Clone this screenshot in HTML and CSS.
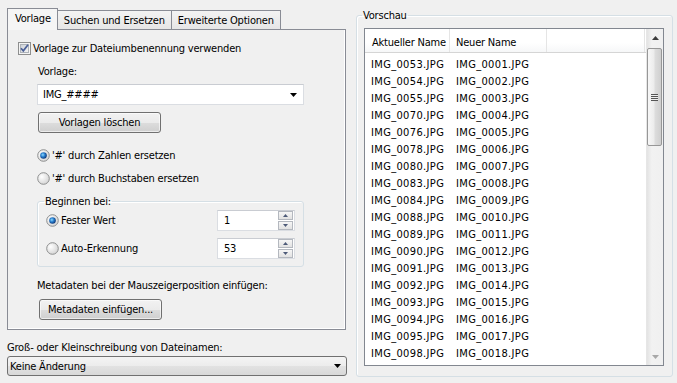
FILE: index.html
```html
<!DOCTYPE html>
<html lang="de">
<head>
    <meta charset="UTF-8">
    <title>Umbenennen</title>
    <link rel="stylesheet" href="styles.css">
</head>
<body>
<div class="window">
    <div class="left">
        <div class="tabs">
            <div class="tab active">Vorlage</div>
            <div class="tab">Suchen und Ersetzen</div>
            <div class="tab">Erweiterte Optionen</div>
        </div>
        <div class="panel">
            <div class="check-row">
                <svg class="checkbox" width="13" height="13" viewBox="0 0 13 13">
                    <defs>
                        <linearGradient id="cbFill" x1="0" y1="0" x2="1" y2="1">
                            <stop offset="0" stop-color="#cbcfd5"/>
                            <stop offset="1" stop-color="#f6f6f6"/>
                        </linearGradient>
                    </defs>
                    <rect x="0.5" y="0.5" width="12" height="12" fill="#f4f4f4" stroke="#8e8f8f"/>
                    <rect x="2.5" y="2.5" width="8" height="8" fill="url(#cbFill)" stroke="#aeb3b9"/>
                    <path d="M3 6.2 L5.3 8.8 L10 2.8" fill="none" stroke="#4a5f97" stroke-width="1.7"/>
                </svg>
                <span>Vorlage zur Dateiumbenennung verwenden</span>
            </div>
            <div class="indent">
                <div class="field-label">Vorlage:</div>
                <div class="combo">
                    <span>IMG_####</span>
                    <svg class="arrow" width="7" height="4" viewBox="0 0 7 4"><path d="M0 0h7L3.5 4z"/></svg>
                </div>
                <button class="btn btn-templates">Vorlagen löschen</button>

                <div class="radio-row first">
                    <svg class="radio" width="13" height="13" viewBox="0 0 13 13">
                        <defs>
                            <radialGradient id="rOff" cx="0.35" cy="0.35" r="0.7">
                                <stop offset="0" stop-color="#ffffff"/>
                                <stop offset="1" stop-color="#d4d4d4"/>
                            </radialGradient>
                            <radialGradient id="rOn" cx="0.4" cy="0.4" r="0.6">
                                <stop offset="0" stop-color="#8fdcff"/>
                                <stop offset="0.5" stop-color="#2a7fcf"/>
                                <stop offset="1" stop-color="#0c3a7c"/>
                            </radialGradient>
                        </defs>
                        <circle cx="6.5" cy="6.5" r="5.8" fill="url(#rOff)" stroke="#8e8f8f"/>
                        <circle cx="6.5" cy="6.5" r="3.3" fill="url(#rOn)"/>
                    </svg>
                    <span>'#' durch Zahlen ersetzen</span>
                </div>
                <div class="radio-row">
                    <svg class="radio" width="13" height="13" viewBox="0 0 13 13">
                        <circle cx="6.5" cy="6.5" r="5.8" fill="url(#rOff)" stroke="#8e8f8f"/>
                    </svg>
                    <span>'#' durch Buchstaben ersetzen</span>
                </div>

                <fieldset class="group">
                    <legend>Beginnen bei:</legend>
                    <div class="group-row">
                        <svg class="radio" width="13" height="13" viewBox="0 0 13 13">
                            <circle cx="6.5" cy="6.5" r="5.8" fill="url(#rOff)" stroke="#8e8f8f"/>
                            <circle cx="6.5" cy="6.5" r="3.3" fill="url(#rOn)"/>
                        </svg>
                        <span>Fester Wert</span>
                        <div class="spin">
                            <span>1</span>
                            <span class="spin-buttons">
                                <span class="spin-btn"><svg width="5" height="3" viewBox="0 0 5 3"><path d="M0 3h5L2.5 0z"/></svg></span>
                                <span class="spin-btn"><svg width="5" height="3" viewBox="0 0 5 3"><path d="M0 0h5L2.5 3z"/></svg></span>
                            </span>
                        </div>
                    </div>
                    <div class="group-row second">
                        <svg class="radio" width="13" height="13" viewBox="0 0 13 13">
                            <circle cx="6.5" cy="6.5" r="5.8" fill="url(#rOff)" stroke="#8e8f8f"/>
                        </svg>
                        <span>Auto-Erkennung</span>
                        <div class="spin">
                            <span>53</span>
                            <span class="spin-buttons">
                                <span class="spin-btn"><svg width="5" height="3" viewBox="0 0 5 3"><path d="M0 3h5L2.5 0z"/></svg></span>
                                <span class="spin-btn"><svg width="5" height="3" viewBox="0 0 5 3"><path d="M0 0h5L2.5 3z"/></svg></span>
                            </span>
                        </div>
                    </div>
                </fieldset>

                <div class="field-label meta-label">Metadaten bei der Mauszeigerposition einfügen:</div>
                <button class="btn btn-meta">Metadaten einfügen...</button>
            </div>
        </div>
        <div class="case-label">Groß- oder Kleinschreibung von Dateinamen:</div>
        <div class="dropdown">
            <span>Keine Änderung</span>
            <svg class="arrow" width="7" height="4" viewBox="0 0 7 4"><path d="M0 0h7L3.5 4z"/></svg>
        </div>
    </div>

    <fieldset class="preview">
        <legend>Vorschau</legend>
        <div class="list">
            <div class="list-main">
                <div class="list-header">
                    <div class="col col-old">Aktueller Name</div>
                    <div class="col col-new">Neuer Name</div>
                    <div class="col col-rest"></div>
                </div>
                <div class="list-rows">
                    <div class="row"><div class="col col-old">IMG_0053.JPG</div><div class="col col-new">IMG_0001.JPG</div></div>
                    <div class="row"><div class="col col-old">IMG_0054.JPG</div><div class="col col-new">IMG_0002.JPG</div></div>
                    <div class="row"><div class="col col-old">IMG_0055.JPG</div><div class="col col-new">IMG_0003.JPG</div></div>
                    <div class="row"><div class="col col-old">IMG_0070.JPG</div><div class="col col-new">IMG_0004.JPG</div></div>
                    <div class="row"><div class="col col-old">IMG_0076.JPG</div><div class="col col-new">IMG_0005.JPG</div></div>
                    <div class="row"><div class="col col-old">IMG_0078.JPG</div><div class="col col-new">IMG_0006.JPG</div></div>
                    <div class="row"><div class="col col-old">IMG_0080.JPG</div><div class="col col-new">IMG_0007.JPG</div></div>
                    <div class="row"><div class="col col-old">IMG_0083.JPG</div><div class="col col-new">IMG_0008.JPG</div></div>
                    <div class="row"><div class="col col-old">IMG_0084.JPG</div><div class="col col-new">IMG_0009.JPG</div></div>
                    <div class="row"><div class="col col-old">IMG_0088.JPG</div><div class="col col-new">IMG_0010.JPG</div></div>
                    <div class="row"><div class="col col-old">IMG_0089.JPG</div><div class="col col-new">IMG_0011.JPG</div></div>
                    <div class="row"><div class="col col-old">IMG_0090.JPG</div><div class="col col-new">IMG_0012.JPG</div></div>
                    <div class="row"><div class="col col-old">IMG_0091.JPG</div><div class="col col-new">IMG_0013.JPG</div></div>
                    <div class="row"><div class="col col-old">IMG_0092.JPG</div><div class="col col-new">IMG_0014.JPG</div></div>
                    <div class="row"><div class="col col-old">IMG_0093.JPG</div><div class="col col-new">IMG_0015.JPG</div></div>
                    <div class="row"><div class="col col-old">IMG_0094.JPG</div><div class="col col-new">IMG_0016.JPG</div></div>
                    <div class="row"><div class="col col-old">IMG_0095.JPG</div><div class="col col-new">IMG_0017.JPG</div></div>
                    <div class="row"><div class="col col-old">IMG_0098.JPG</div><div class="col col-new">IMG_0018.JPG</div></div>
                </div>
            </div>
            <div class="scrollbar">
                <div class="scroll-arrow"><svg width="7" height="4" viewBox="0 0 7 4"><path d="M0 4h7L3.5 0z"/></svg></div>
                <div class="scroll-thumb"><span class="grip"></span></div>
                <div class="scroll-track"></div>
                <div class="scroll-arrow down"><svg width="7" height="4" viewBox="0 0 7 4"><path d="M0 0h7L3.5 4z"/></svg></div>
            </div>
        </div>
    </fieldset>
</div>
</body>
</html>
```

FILE: styles.css
```css
* {
    box-sizing: border-box;
}
body {
    margin: 0;
    background: #f0f0f0;
    font-family: Tahoma, "DejaVu Sans Condensed", "Liberation Sans", sans-serif;
    font-size: 11px;
    line-height: 13px;
    letter-spacing: -0.2px;
    color: #000;
}
.window {
    display: flex;
    align-items: flex-start;
    width: 677px;
    height: 383px;
    overflow: hidden;
}

/* left side: tab control */
.left {
    width: 347px;
    padding: 8px 0 0 7px;
}
.tabs {
    display: flex;
    align-items: flex-end;
    height: 22px;
    margin-bottom: -1px;
    position: relative;
    z-index: 1;
}
.tab {
    height: 19px;
    margin-bottom: 1px;
    margin-left: -1px;
    padding: 3px 6px 0 6px;
    border: 1px solid #898c95;
    border-bottom: none;
    background: linear-gradient(#f3f3f3, #e6e6e6);
    white-space: nowrap;
}
.tab.active {
    height: 22px;
    margin-bottom: 0;
    margin-left: 0;
    padding: 3px 6px 0 7px;
    background: #f5f5f5;
    position: relative;
    z-index: 2;
}
.panel {
    width: 339px;
    height: 301px;
    border: 1px solid #898c95;
    box-shadow: inset -1px -1px 0 #fff;
    padding: 12px 0 0 10px;
}
.check-row {
    display: flex;
    align-items: center;
    height: 13px;
}
.checkbox {
    margin-right: 2px;
    flex: none;
}
.indent {
    margin-left: 19px;
}
.field-label {
    margin-top: 10px;
    padding-left: 1px;
}
.combo {
    display: flex;
    align-items: center;
    justify-content: space-between;
    width: 267px;
    height: 21px;
    margin-top: 6px;
    padding: 0 6px 0 5px;
    background: #fff;
    border: 1px solid #dadde2;
    border-top-color: #c9ccd2;
}
.btn {
    display: block;
    width: 123px;
    height: 21px;
    padding: 0;
    font: inherit;
    letter-spacing: inherit;
    color: #000;
    border: 1px solid #707070;
    border-radius: 3px;
    background: linear-gradient(#f2f2f2, #ebebeb 50%, #dddddd 50%, #cfcfcf);
    box-shadow: inset 0 0 0 1px rgba(255, 255, 255, 0.6);
}
.btn-templates {
    margin: 7px 0 0 1px;
}
.radio-row {
    display: flex;
    align-items: center;
    height: 14px;
    margin-top: 9px;
}
.radio-row.first {
    margin-top: 15px;
}
.radio {
    flex: none;
    margin-right: 2px;
}
.group {
    width: 267px;
    margin: 10px 0 0 0;
    padding: 0 8px 7px 8px;
    border: 1px solid #d5dfe5;
    border-radius: 3px;
    box-shadow: inset 1px 1px 0 #fff;
}
.group legend {
    padding: 0 1px;
    margin-left: -2px;
}
.group-row {
    display: flex;
    align-items: center;
    margin-top: 2px;
}
.group-row.second {
    margin-top: 7px;
}
.spin {
    display: flex;
    align-items: center;
    width: 78px;
    height: 21px;
    margin-left: auto;
    padding-left: 6px;
    background: #fff;
    border: 1px solid #dadde2;
    border-top-color: #c9ccd2;
}
.spin-buttons {
    display: flex;
    flex-direction: column;
    gap: 1px;
    margin-left: auto;
    margin-right: 1px;
}
.spin-btn {
    display: flex;
    align-items: center;
    justify-content: center;
    width: 15px;
    height: 9px;
    border: 1px solid #b4b8bf;
    background: linear-gradient(#f6f6f6, #e2e2e2);
}
.spin-btn svg {
    fill: #4d5a78;
}
.meta-label {
    margin-top: 12px;
    padding-left: 0;
}
.btn-meta {
    margin: 7px 0 0 2px;
}
.case-label {
    margin-top: 11px;
}
.dropdown {
    display: flex;
    align-items: center;
    justify-content: space-between;
    width: 340px;
    height: 20px;
    margin-top: 2px;
    padding: 0 5px 0 2px;
    border: 1px solid #707070;
    border-radius: 3px;
    background: linear-gradient(#f4f4f4, #ececec 50%, #e2e2e2 50%, #d8d8d8);
}

/* right side: preview */
.preview {
    width: 317px;
    margin: 9px 0 0 9px;
    padding: 0 8px 10px 7px;
    border: 1px solid #d5dfe5;
    border-radius: 3px;
    box-shadow: inset 1px 1px 0 #fff;
}
.preview legend {
    padding: 0 1px;
    margin-left: -2px;
}
.list {
    display: flex;
    width: 300px;
    height: 338px;
    margin-top: 6px;
    border: 1px solid #828790;
    background: #fff;
}
.list-main {
    width: 281px;
    overflow: hidden;
}
.list-header {
    display: flex;
    height: 24px;
    border-bottom: 1px solid #d5d5d5;
    background: linear-gradient(#ffffff, #ffffff 60%, #f6f7f8);
}
.list-header .col {
    border-right: 1px solid #e5e5e5;
    padding-top: 7px;
    height: 23px;
}
.col {
    white-space: nowrap;
}
.col-old {
    width: 85px;
    padding-left: 7px;
}
.col-new {
    width: 97px;
    padding-left: 6px;
}
.col-rest {
    width: 98px;
}
.list-rows {
    padding-top: 3px;
    letter-spacing: 0.35px;
}
.row {
    display: flex;
    align-items: center;
    height: 17px;
}
.row .col-old {
    width: 85px;
    padding-left: 6px;
}

.scrollbar {
    display: flex;
    flex-direction: column;
    width: 17px;
    background: linear-gradient(to right, #e3e3e3, #f2f2f2 30%, #f0f0f0);
    border-left: 1px solid #e6e6e6;
}
.scroll-arrow {
    display: flex;
    align-items: center;
    justify-content: center;
    height: 17px;
    flex: none;
}
.scroll-arrow svg {
    fill: #3c3c3c;
}
.scroll-arrow.down svg {
    fill: #a8a8a8;
}
.scroll-thumb {
    display: flex;
    align-items: center;
    justify-content: center;
    height: 98px;
    margin: 2px 0 0 0;
    width: 15px;
    border: 1px solid #979797;
    border-radius: 2px;
    background: linear-gradient(to right, #f7f7f7, #ececec 45%, #dcdcdc 55%, #cfcfcf);
    flex: none;
}
.grip {
    width: 7px;
    height: 7px;
    background: repeating-linear-gradient(#555 0 1px, #eee 1px 2px);
}
.scroll-track {
    flex: 1;
}
```
